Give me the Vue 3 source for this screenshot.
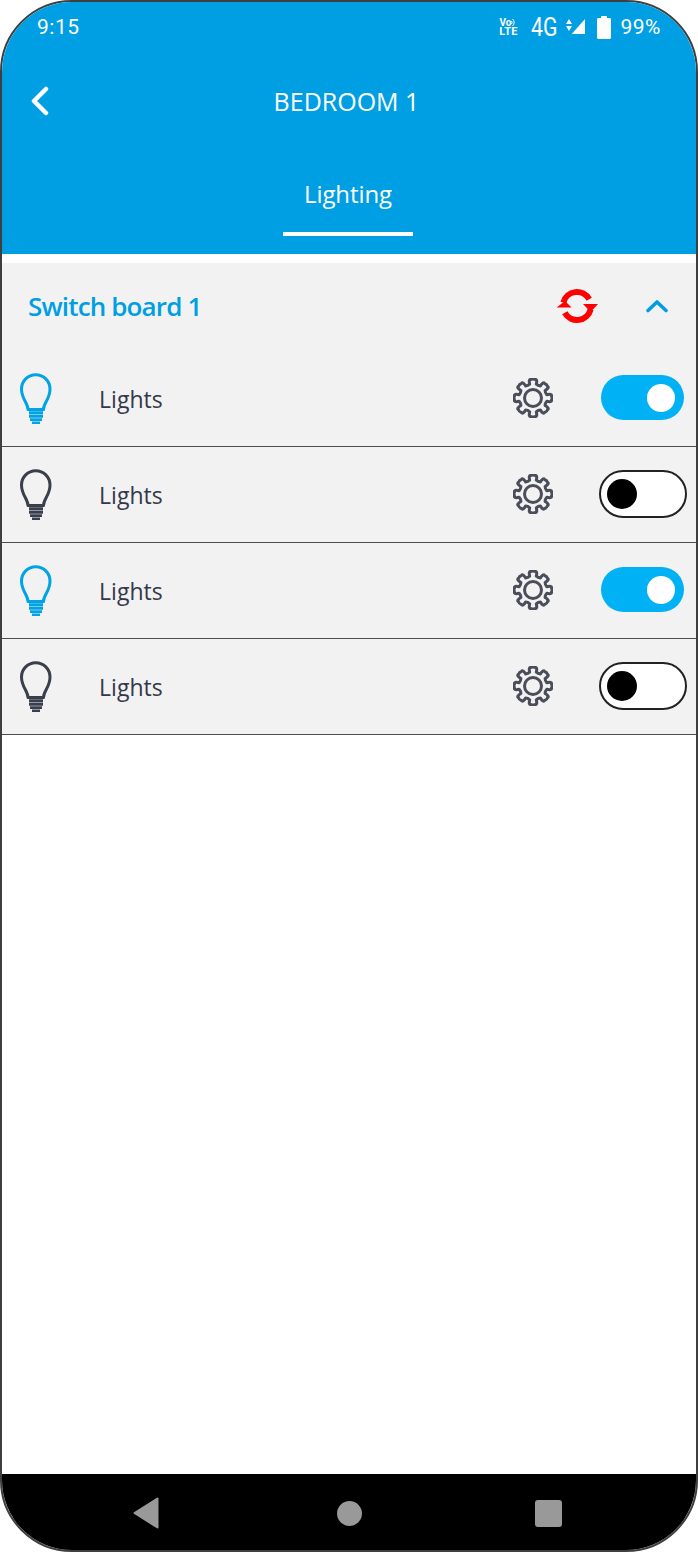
<script setup>
const rows = [
  { id: 1, on: true },
  { id: 2, on: false },
  { id: 3, on: true },
  { id: 4, on: false },
];

// eight rounded teeth, same outline for every row
const gearPath = (() => {
  const teeth = 8;
  const cx = 20;
  const cy = 20;
  const out = 18.6;
  const inn = 14.2;
  let d = '';
  for (let i = 0; i < teeth; i++) {
    const a = (i * Math.PI * 2) / teeth - Math.PI / 2;
    const step = (Math.PI * 2) / teeth;
    const pt = (r, off) => {
      const x = cx + r * Math.cos(a + off * step);
      const y = cy + r * Math.sin(a + off * step);
      return `${x.toFixed(2)} ${y.toFixed(2)}`;
    };
    d += `${i === 0 ? 'M' : 'L'}${pt(inn, -0.3)} Q${pt(out + 1, -0.3)} ${pt(out, -0.14)} `;
    d += `Q${pt(out + 1, 0)} ${pt(out, 0.14)} Q${pt(out + 1, 0.3)} ${pt(inn, 0.3)} `;
    d += `Q${pt(inn - 1, 0.5)} ${pt(inn, 0.7)} `;
  }
  return d + 'Z';
})();
</script>

<template>
  <div class="phone">
    <header class="header">
      <div class="status">
        <span class="time">9:15</span>
        <div class="status-right">
          <div class="volte">
            <span class="vo">Vo<svg width="6" height="9" viewBox="0 0 6 9"><path d="M1.500 1a4.500 4.500 0 0 1 0 7M.5 3a2.200 2.200 0 0 1 0 3" fill="none" stroke="#fff" stroke-width="1"/></svg></span>
            <span class="lte">LTE</span>
          </div>
          <span class="net">4G</span>
          <svg class="signal" width="20" height="18" viewBox="0 0 20 18">
            <path d="M4 1 7 6H1zM4 13 1 8h6z" fill="#fff" />
            <path d="M20 1V16H6.700z" fill="#fff" />
          </svg>
          <svg class="battery" width="14" height="23" viewBox="0 0 14 23">
            <path d="M4 2V1.200C4 .6 4.500 0 5 0h4c.6 0 1 .6 1 1.200V2h2.500c.8 0 1.500.7 1.500 1.500V21.500c0 .8-.7 1.500-1.500 1.500h-11C.7 23 0 22.300 0 21.500V3.500C0 2.700.7 2 1.500 2z" fill="#fff" />
          </svg>
          <span class="percent">99%</span>
        </div>
      </div>
      <div class="title-row">
        <svg class="back" width="20" height="30" viewBox="0 0 20 30">
          <path d="M16 3 4 15l12 12" fill="none" stroke="#fff" stroke-width="4.500" stroke-linecap="round" stroke-linejoin="round" />
        </svg>
        <h1 class="title">BEDROOM 1</h1>
      </div>
      <nav class="tabs">
        <div class="tab">Lighting</div>
      </nav>
    </header>

    <main class="content">
      <section class="board">
        <div class="board-head">
          <h2 class="board-name">Switch board 1</h2>
          <svg class="sync" width="44" height="36" viewBox="0 0 44 36">
            <path d="M8.400 14.500A14 14 0 0 1 34.200 11.200" fill="none" stroke="#ff0000" stroke-width="6" />
            <path d="M35.600 21.500A14 14 0 0 1 9.800 24.800" fill="none" stroke="#ff0000" stroke-width="6" />
            <path d="M1.600 19.600 10 13l6.600 6.600z" fill="#ff0000" />
            <path d="M28 16h15l-7.400 8z" fill="#ff0000" />
          </svg>
          <svg class="chevron" width="24" height="14" viewBox="0 0 24 14">
            <path d="M3 11.500 12 3l9 8.500" fill="none" stroke="#009ee3" stroke-width="3.600" stroke-linecap="round" stroke-linejoin="round" />
          </svg>
        </div>

        <div v-for="row in rows" :key="row.id" class="row">
          <svg class="bulb" :class="{ lit: row.on }" width="34" height="52" viewBox="0 0 34 52">
            <path d="M9 36.500C9 30 2.500 26 2.500 16A14.200 14.200 0 0 1 31 16C31 26 24.500 30 24.500 36.500Z" fill="none" stroke="currentColor" stroke-width="3" stroke-linejoin="round" />
            <path d="M10 38.200h14v3.100H10zM10 41.700h14v3.100H10zM11 45.200h12v2.800H11zM13 48.400h8V51h-8z" fill="currentColor" />
          </svg>
          <span class="label">Lights</span>
          <svg class="gear" width="40" height="40" viewBox="0 0 40 40">
            <path :d="gearPath" fill="none" stroke="#4a4e5a" stroke-width="3" stroke-linejoin="round" />
            <circle cx="20" cy="20" r="8.500" fill="none" stroke="#4a4e5a" stroke-width="3" />
          </svg>
          <div class="toggle-slot">
            <div class="toggle" :class="row.on ? 'on' : 'off'">
              <span class="knob"></span>
            </div>
          </div>
        </div>
      </section>
    </main>

    <footer class="navbar">
      <svg width="26" height="32" viewBox="0 0 26 32">
        <path d="M24.500 1.500V30.500L1.500 16z" fill="#999" stroke="#999" stroke-width="2" stroke-linejoin="round" />
      </svg>
      <span class="home"></span>
      <span class="recent"></span>
    </footer>
  </div>
</template>

<style scoped>
.phone {
  box-sizing: border-box;
  width: 698px;
  height: 1552px;
  border: 2px solid #3f3f3f;
  border-radius: 72px;
  overflow: hidden;
  display: flex;
  flex-direction: column;
  background: #fff;
  font-family: "Open Sans", sans-serif;
}

.header {
  height: 252px;
  flex: none;
  background: #009ee3;
  color: #fff;
  display: flex;
  flex-direction: column;
}

.status {
  height: 50px;
  display: flex;
  align-items: center;
  justify-content: space-between;
  padding: 0 35px;
  font-family: Roboto, sans-serif;
  font-size: 21px;
  letter-spacing: 0.5px;
}

.status-right {
  display: flex;
  align-items: center;
}

.volte {
  display: flex;
  flex-direction: column;
  align-items: center;
  width: 20px;
  font-size: 10px;
  font-weight: 700;
  line-height: 9px;
  letter-spacing: 0;
}

.vo {
  display: flex;
  align-items: center;
}

.lte {
  font-size: 11px;
  letter-spacing: 0.3px;
}

.net {
  width: 28px;
  margin-left: 12px;
  font-size: 25px;
  transform: scaleX(0.85);
  transform-origin: left center;
  letter-spacing: 0;
}

.signal {
  margin-left: 6px;
}

.battery {
  margin-left: 12px;
}

.percent {
  margin-left: 10px;
}

.title-row {
  height: 98px;
  display: flex;
  align-items: center;
  justify-content: center;
  position: relative;
}

.back {
  position: absolute;
  left: 28px;
  top: 34px;
}

.title {
  margin: 0 5px 0 0;
  font-size: 25px;
  font-weight: 400;
}

.tabs {
  display: flex;
  justify-content: center;
  padding-right: 2px;
}

.tab {
  width: 130px;
  height: 86px;
  box-sizing: border-box;
  padding-top: 28px;
  border-bottom: 4px solid #fff;
  text-align: center;
  font-size: 24px;
  letter-spacing: -0.1px;
  line-height: 32px;
}

.content {
  flex: 1;
  padding-top: 9px;
}

.board {
  background: #f2f2f2;
}

.board-head {
  height: 88px;
  display: flex;
  align-items: center;
  padding: 0 0 2px 26px;
  box-sizing: border-box;
}

.board-name {
  margin: 0;
  flex: 1;
  color: #009ee3;
  font-size: 26px;
  font-weight: 600;
  letter-spacing: -0.85px;
}

.sync {
  margin-right: 46px;
}

.chevron {
  margin-right: 27px;
}

.row {
  box-sizing: border-box;
  height: 96px;
  border-bottom: 1px solid #4d4d4d;
  display: flex;
  align-items: center;
  padding: 0 9px 2px 17px;
}

.bulb {
  flex: none;
  margin-top: 2px;
  color: #3a3f4d;
}

.bulb.lit {
  color: #00a3e6;
}

.label {
  flex: 1;
  margin-left: 46px;
  padding-top: 2px;
  color: #343849;
  font-size: 23px;
  letter-spacing: 0.05px;
}

.gear {
  flex: none;
  margin-right: 46px;
}

.toggle-slot {
  width: 88px;
  display: flex;
  justify-content: center;
}

.toggle {
  box-sizing: border-box;
  display: flex;
  align-items: center;
  border-radius: 24px;
}

.toggle.on {
  width: 83px;
  height: 45px;
  margin-right: 1px;
  justify-content: flex-end;
  padding-right: 9px;
  background: #00b2f5;
}

.toggle.off {
  width: 88px;
  height: 48px;
  padding-left: 6px;
  background: #fff;
  border: 2px solid #222;
}

.knob {
  border-radius: 50%;
}

.on .knob {
  width: 28px;
  height: 28px;
  background: #fff;
}

.off .knob {
  width: 30px;
  height: 30px;
  background: #000;
}

.navbar {
  height: 74px;
  flex: none;
  background: #000;
  display: flex;
  align-items: center;
  justify-content: space-between;
  padding: 2px 134px 0 131px;
}

.home {
  width: 25px;
  height: 25px;
  margin-left: 4px;
  border-radius: 50%;
  background: #999;
}

.recent {
  width: 27px;
  height: 27px;
  border-radius: 3px;
  background: #999;
}
</style>
